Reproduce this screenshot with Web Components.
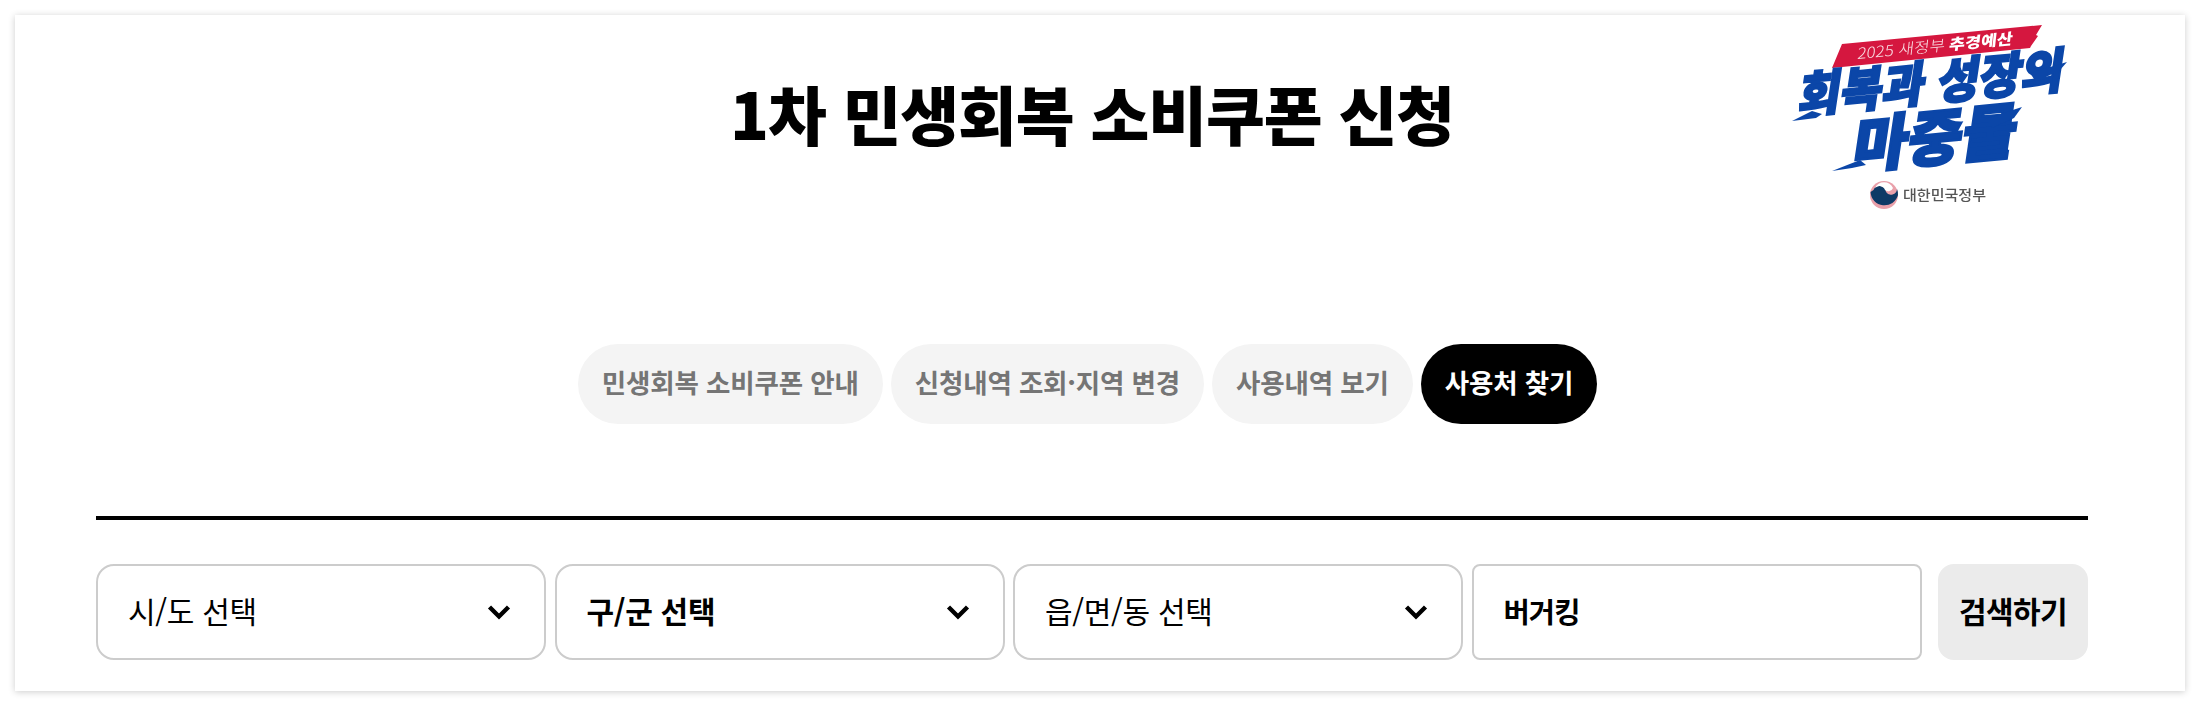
<!DOCTYPE html>
<html lang="ko">
<head>
<meta charset="utf-8">
<title>1차 민생회복 소비쿠폰 신청</title>
<style>
    html, body {
        margin: 0;
        background: #fff;
        font-family: "Noto Sans CJK KR", "Noto Sans", sans-serif;
        color: #000;
    }
</style>
</head>
<body>
<coupon-page>
    <span slot="title">1차 민생회복 소비쿠폰 신청</span>
    <tab-pill>민생회복 소비쿠폰 안내</tab-pill>
    <tab-pill>신청내역 조회·지역 변경</tab-pill>
    <tab-pill>사용내역 보기</tab-pill>
    <tab-pill active>사용처 찾기</tab-pill>
    <select-box slot="search">시/도 선택</select-box>
    <select-box slot="search" strong>구/군 선택</select-box>
    <select-box slot="search">읍/면/동 선택</select-box>
    <search-field slot="search">버거킹</search-field>
    <search-button slot="search">검색하기</search-button>
</coupon-page>

<script>
class CouponPage extends HTMLElement {
    constructor() {
        super();
        this.shadowDOM = this.attachShadow({ mode: "open" });
    }

    connectedCallback() {
        this.render();
    }

    render() {
        this.shadowDOM.innerHTML = `
        <style>
        :host {
            display: block;
            padding: 15px;
        }
        .card {
            height: 676px;
            box-sizing: border-box;
            padding: 0 97px 31px 81px;
            background: #fff;
            box-shadow: 0 1px 7px rgba(0, 0, 0, 0.2);
        }
        header {
            display: grid;
            grid-template-columns: 1fr auto 1fr;
            height: 329px;
        }
        h1 {
            grid-column: 2;
            margin: 55px 0 0;
            font-size: 64px;
            line-height: 84px;
            font-weight: 900;
            letter-spacing: -1.1px;
            white-space: nowrap;
        }
        campaign-logo {
            grid-column: 3;
            justify-self: end;
            margin-top: 5px;
            margin-right: 13px;
        }
        nav {
            display: flex;
            justify-content: center;
            gap: 8px;
            margin-right: 9px;
        }
        .rule {
            height: 4px;
            margin: 92px 0 44px;
            background: #000;
        }
        .search {
            display: flex;
            gap: 8.5px;
        }
        </style>
        <div class="card">
            <header>
                <h1><slot name="title"></slot></h1>
                <campaign-logo></campaign-logo>
            </header>
            <nav><slot></slot></nav>
            <div class="rule"></div>
            <div class="search"><slot name="search"></slot></div>
        </div>`;
    }
}

class TabPill extends HTMLElement {
    constructor() {
        super();
        this.shadowDOM = this.attachShadow({ mode: "open" });
        this.shadowDOM.innerHTML = `
        <style>
        :host {
            display: flex;
            align-items: center;
            box-sizing: border-box;
            height: 80px;
            padding: 0 24px 5px;
            border-radius: 40px;
            background: #f4f4f4;
            color: #757575;
            font-size: 26.5px;
            font-weight: 700;
            letter-spacing: -0.15px;
            white-space: nowrap;
        }
        :host([active]) {
            background: #000;
            color: #fff;
        }
        </style>
        <slot></slot>`;
    }
}

class SelectBox extends HTMLElement {
    constructor() {
        super();
        this.shadowDOM = this.attachShadow({ mode: "open" });
        this.shadowDOM.innerHTML = `
        <style>
        :host {
            flex: 0 0 450px;
            display: flex;
            align-items: center;
            justify-content: space-between;
            box-sizing: border-box;
            height: 96px;
            padding: 0 33px 0 30px;
            border: 2px solid #ccc;
            border-radius: 18px;
            font-size: 30px;
            letter-spacing: -0.3px;
            white-space: nowrap;
        }
        :host([strong]) {
            font-weight: 700;
        }
        .label {
            padding-bottom: 5px;
        }
        svg {
            display: block;
            width: 24px;
            height: 16px;
        }
        </style>
        <span class="label"><slot></slot></span>
        <svg viewBox="0 0 24 16" fill="none" stroke="#000" stroke-width="4.4">
            <path d="M2.5 3 L12 12.5 L21.5 3"/>
        </svg>`;
    }
}

class SearchField extends HTMLElement {
    constructor() {
        super();
        this.shadowDOM = this.attachShadow({ mode: "open" });
        this.shadowDOM.innerHTML = `
        <style>
        :host {
            flex: 1 1 0;
            display: flex;
            align-items: center;
            box-sizing: border-box;
            height: 96px;
            padding: 0 30px 4px;
            border: 2px solid #ccc;
            border-radius: 8px;
            font-size: 28.5px;
            font-weight: 700;
            letter-spacing: -0.9px;
        }
        </style>
        <slot></slot>`;
    }
}

class SearchButton extends HTMLElement {
    constructor() {
        super();
        this.shadowDOM = this.attachShadow({ mode: "open" });
        this.shadowDOM.innerHTML = `
        <style>
        :host {
            flex: 0 0 150px;
            display: flex;
            align-items: center;
            justify-content: center;
            box-sizing: border-box;
            height: 96px;
            margin-left: 8px;
            padding-bottom: 4px;
            border-radius: 16px;
            background: #ebebeb;
            font-size: 30px;
            font-weight: 700;
            letter-spacing: -0.6px;
        }
        </style>
        <slot></slot>`;
    }
}

class CampaignLogo extends HTMLElement {
    constructor() {
        super();
        this.shadowDOM = this.attachShadow({ mode: "open" });
        this.shadowDOM.innerHTML = `
        <style>
        :host {
            display: block;
            width: 290px;
            height: 200px;
        }
        svg {
            display: block;
            overflow: visible;
            filter: blur(0.5px);
            font-family: "Noto Sans CJK KR", sans-serif;
        }
        </style>
        <svg width="290" height="200" viewBox="25 10 290 200">
            <!-- red banner -->
            <path d="M72 58 L82 34 L282 15 L276 25 L278 26 L271 36 L270 38 Z" fill="#d5173f"/>
            <g transform="translate(97 49) rotate(-5.5) skewX(-12)" fill="#fff">
                <text font-size="15" font-weight="300" textLength="88" lengthAdjust="spacingAndGlyphs" opacity="0.85">2025 새정부</text>
                <text x="92" font-size="15" font-weight="900" textLength="64" lengthAdjust="spacingAndGlyphs">추경예산</text>
            </g>
            <!-- slogan -->
            <g fill="#0b46a8" stroke="#0b46a8">
                <text transform="translate(37 103) rotate(-5.5) skewX(-14)" font-size="48" font-weight="900" stroke-width="2.2" textLength="266" lengthAdjust="spacingAndGlyphs">회복과 성장의</text>
                <text transform="translate(91 158) rotate(-5.5) skewX(-14)" font-size="60" font-weight="900" stroke-width="2.6" textLength="164" lengthAdjust="spacingAndGlyphs">마중물</text>
            </g>
            <g fill="#0b46a8">
                <path d="M32 111 L52 101 L62 104 L56 108 Z"/>
                <path d="M72 161 L100 150 L106 155 L92 158 Z"/>
                <path d="M270 63 L307 52 L300 60 L276 72 Z"/>
                <path d="M225 109 L262 97 L254 108 L232 118 Z"/>
            </g>
            <!-- government mark -->
            <circle cx="124" cy="185" r="14" fill="#e9a0aa"/>
            <path d="M110.5 182 A14 14 0 0 0 138 185 A14 14 0 0 0 137 179 A6 6 0 0 1 126 182 A6.5 6.5 0 0 0 113.5 180 Z" fill="#0e3a66"/>
            <path d="M115 178 A10 10 0 0 1 133 178 A5 5 0 0 1 125 180 A6 6 0 0 0 115 178 Z" fill="#fff"/>
            <text x="143" y="190" font-size="14" font-weight="500" fill="#555" textLength="83" lengthAdjust="spacingAndGlyphs">대한민국정부</text>
        </svg>`;
    }
}

customElements.define("coupon-page", CouponPage);
customElements.define("tab-pill", TabPill);
customElements.define("select-box", SelectBox);
customElements.define("search-field", SearchField);
customElements.define("search-button", SearchButton);
customElements.define("campaign-logo", CampaignLogo);
</script>
</body>
</html>
